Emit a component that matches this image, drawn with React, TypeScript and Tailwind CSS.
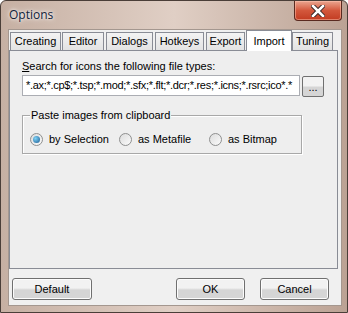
import React from 'react';

const font = { fontFamily: '"Liberation Sans", Arial, sans-serif' };

function Tab({ label, w, ml, active }: { label: string; w: number; ml: number; active?: boolean }) {
  if (active) {
    return (
      <div
        className="relative z-10 mb-[-1px] flex h-[21px] items-start justify-center border border-b-0 border-[#898c95] bg-white pt-[2px] text-[11px] text-black"
        style={{ width: w, marginLeft: ml }}
      >
        {label}
      </div>
    );
  }
  return (
    <div
      className="flex h-[18px] items-center justify-center border border-b-0 border-[#898c95] bg-gradient-to-b from-[#f3f3f3] to-[#e3e3e3] text-[11px] text-black"
      style={{ width: w, marginLeft: ml }}
    >
      {label}
    </div>
  );
}

function Radio({ label, checked }: { label: string; checked?: boolean }) {
  return (
    <div className="flex items-center gap-[6px]">
      <div className="flex h-[13px] w-[13px] items-center justify-center rounded-full border border-[#8e8f8f] bg-gradient-to-br from-[#dcdcdc] to-[#fbfbfb]">
        {checked && (
          <div className="h-[7px] w-[7px] rounded-full bg-[radial-gradient(circle_at_35%_35%,#7fd3f7,#1c5b92)]" />
        )}
      </div>
      <span className="text-[11px] text-black">{label}</span>
    </div>
  );
}

function Btn({ label, w }: { label: string; w: number }) {
  return (
    <div
      className="flex h-[22px] items-center justify-center rounded-[3px] border border-[#707070] bg-gradient-to-b from-[#f2f2f2] from-45% to-[#d5d5d5] to-55% text-[11px] text-black shadow-[inset_0_0_0_1px_#fcfcfc]"
      style={{ width: w }}
    >
      {label}
    </div>
  );
}

export default function App() {
  return (
    <div
      className="relative h-[313px] w-[348px] overflow-hidden rounded-t-[6px] border border-[#4a3e38] bg-gradient-to-r from-[#c6b0a3] via-[#e0cfc5] to-[#bba294]"
      style={font}
    >
      {/* title bar */}
      <div className="flex h-[28px] items-center pl-[8px]">
        <span
          className="text-[12px] text-[#10223a]"
          style={{ fontFamily: '"Open Sans", "Liberation Sans", sans-serif', textShadow: '0 0 6px #fff, 0 0 3px #fff' }}
        >
          Options
        </span>
      </div>
      <div className="absolute right-[5px] top-0 flex h-[20px] w-[48px] items-center justify-center rounded-b-[4px] border border-t-0 border-[#5a2a20] bg-gradient-to-b from-[#e9a590] via-[#d3573c] to-[#c23b21] shadow-[inset_0_0_0_1px_rgba(255,200,180,0.5)]">
        <svg width="14" height="12" viewBox="0 0 14 12">
          <path d="M2 1 L12 11 M12 1 L2 11" stroke="#3a2a2a" strokeWidth="4.5" strokeLinecap="square" />
          <path d="M2 1 L12 11 M12 1 L2 11" stroke="#fff" strokeWidth="2.5" strokeLinecap="square" />
        </svg>
      </div>

      {/* client area */}
      <div className="ml-[7px] flex h-[277px] w-[334px] flex-col border border-[#a4978f] bg-[#f0f0f0]">
        {/* tabs */}
        <div className="flex items-end">
          <Tab label="Creating" w={51} ml={1} />
          <Tab label="Editor" w={42} ml={1} />
          <Tab label="Dialogs" w={47} ml={2} />
          <Tab label="Hotkeys" w={49} ml={2} />
          <Tab label="Export" w={39} ml={2} />
          <Tab label="Import" w={46} ml={1} active />
          <Tab label="Tuning" w={41} ml={0} />
        </div>
        {/* panel */}
        <div className="h-[219px] w-[329px] border border-[#898c95] bg-[#eeeeee]">
          <div className="pl-[12px] pt-[8px]">
            <div className="text-[11px] leading-[14px] text-black">
              <span className="underline">S</span>earch for icons the following file types:
            </div>
            <div className="mt-[2px] flex items-start gap-[2px]">
              <div className="flex h-[21px] w-[278px] items-center overflow-hidden whitespace-nowrap border border-[#abadb3] bg-white pl-[3px] text-[11px] tracking-[-0.3px] text-black">
                *.ax;*.cp$;*.tsp;*.mod;*.sfx;*.flt;*.dcr;*.res;*.icns;*.rsrc;ico*.*
              </div>
              <div className="mt-[1px] flex h-[21px] w-[22px] items-end justify-center rounded-[2px] border border-[#707070] bg-gradient-to-b from-[#f2f2f2] from-45% to-[#d5d5d5] to-55% pb-[4px] text-[11px] leading-[10px] text-black">
                ...
              </div>
            </div>
            {/* group box */}
            <div className="relative mt-[18px] h-[39px] w-[280px] border border-[#a8a8a8] shadow-[1px_1px_0_#fff,inset_1px_1px_0_#fff]">
              <span className="absolute -top-[8px] left-[7px] bg-[#eeeeee] px-[1px] text-[11px] leading-[14px] text-black">
                Paste images from clipboard
              </span>
              <div className="flex pl-[7px] pt-[15px]">
                <div className="w-[89px]">
                  <Radio label="by Selection" checked />
                </div>
                <div className="w-[90px]">
                  <Radio label="as Metafile" />
                </div>
                <Radio label="as Bitmap" />
              </div>
            </div>
          </div>
        </div>
        {/* buttons */}
        <div className="mt-[9px] flex pl-[3px]">
          <Btn label="Default" w={80} />
          <div className="ml-[84px]">
            <Btn label="OK" w={69} />
          </div>
          <div className="ml-[15px]">
            <Btn label="Cancel" w={69} />
          </div>
        </div>
      </div>
    </div>
  );
}
